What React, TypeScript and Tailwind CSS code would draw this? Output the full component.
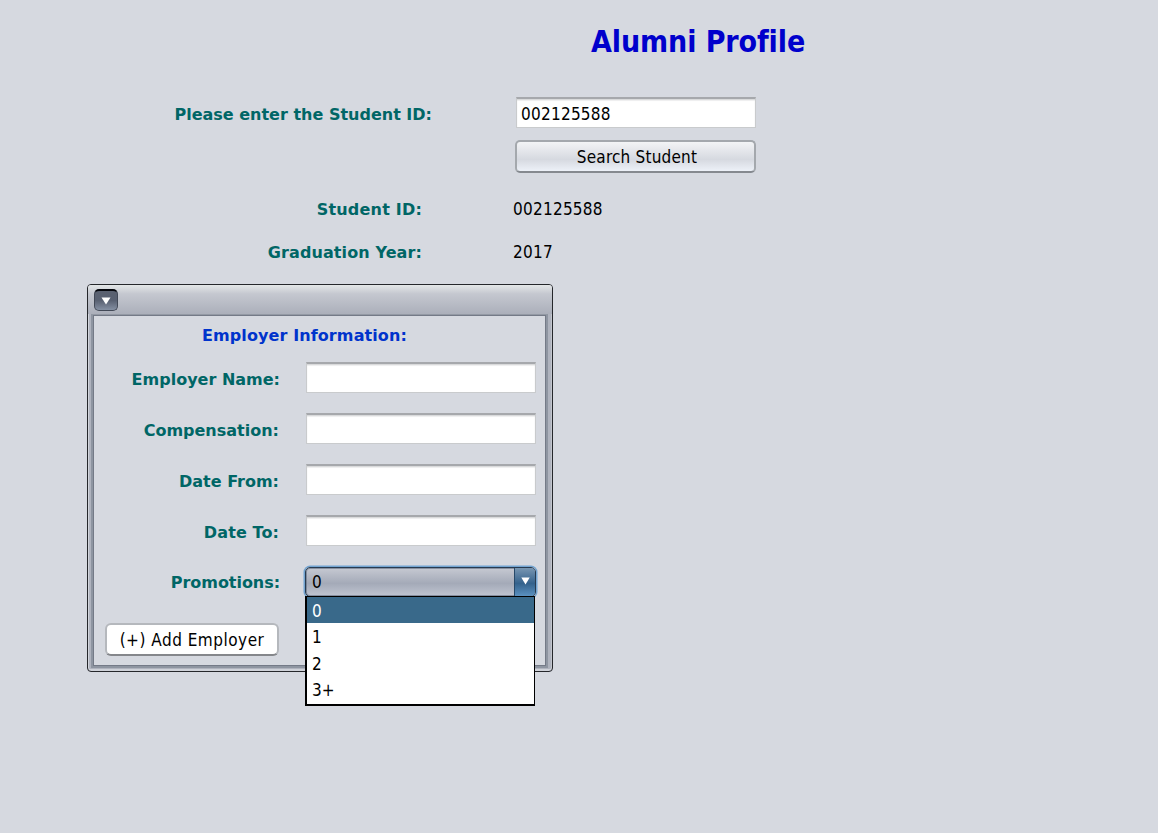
import React from "react";

const labelClass = "font-['DejaVu_Sans',sans-serif] text-[16px] font-bold leading-[20px] whitespace-nowrap text-[#006666] [font-stretch:normal]";
const valueClass = "text-[17px] leading-[20px] whitespace-nowrap text-black";
const fieldClass =
  "border border-t-2 border-[#c9cbcd] border-t-[#a6a8ac] bg-white shadow-[inset_0_1px_1px_#d6d7d9,inset_0_2px_1px_#f1f1f1] outline-none";

function EmployerRow({ label, tracking }: { label: string; tracking: string }) {
  return (
    <div className="flex h-[31px] items-center">
      <label className={`${labelClass} ${tracking} w-[186px] pt-[4px] text-right`}>{label}</label>
      <input className={`${fieldClass} ml-[26px] h-[31px] w-[230px]`} />
    </div>
  );
}

function Promotions() {
  const options = ["0", "1", "2", "3+"];
  return (
    <div className="relative ml-[25px] h-[30px] w-[231px]">
      <button className="flex h-[30px] w-[231px] overflow-hidden rounded-[5px] border border-[#273b51] bg-linear-to-b from-[#c6c9d2] via-[#a4aab8] via-55% to-[#c0c5d1] shadow-[0_0_0_1.5px_#73a4d1,inset_0_0_0_1px_#5f6b7f99]">
        <span className={`${valueClass} flex h-full flex-1 items-center pl-[6px] text-left`}>0</span>
        <span className="flex h-full w-[21px] items-center justify-center border-l border-[#27496a] bg-linear-to-b from-[#7896b2] via-[#34628c] via-55% to-[#5b91c0]">
          <svg width="9" height="8" viewBox="0 0 9 8" className="mb-[2px]">
            <path d="M0.3 0.5h8.4L4.5 7.6z" fill="#fff" />
          </svg>
        </span>
      </button>
      <ul className="absolute left-0 top-[29px] z-10 h-[110px] w-[230px] border-t border-r border-b-2 border-l-2 border-black bg-white">
        {options.map((o, i) => (
          <li
            key={o}
            className={`h-[26.4px] pl-[5px] pt-[4px] text-[17px] leading-[20px] ${i === 0 ? "bg-[#39698a] text-white" : "text-black"}`}
          >
            {o}
          </li>
        ))}
      </ul>
    </div>
  );
}

function EmployerFrame() {
  return (
    <section className="ml-[87px] mt-[17px] flex h-[388px] w-[466px] flex-col rounded-[4px] border border-[#25272b] bg-[#afb3be] shadow-[inset_1px_0_#d2d5dc,inset_0_-2px_#cfd2d9,inset_-1px_0_#c3c6ce]">
      <header className="flex h-[29px] shrink-0 items-start rounded-t-[3px] bg-linear-to-b from-[#e4e7e8] via-[#c5c8d0] via-30% to-[#abafba] pl-[6px] pt-[4px]">
        <button className="flex h-[22px] w-[24px] items-center justify-center rounded-[5px] border-[1px] border-t-2 border-[#424957] border-t-[#05070d] bg-linear-to-b from-[#5a6170] via-[#596172] to-[#8590a3]">
          <svg width="10" height="8" viewBox="0 0 10 8">
            <path d="M0.5 0.5h9L5 7.5z" fill="#fff" />
          </svg>
        </button>
      </header>
      <div className="mb-[3px] ml-[3px] mr-[4px] flex-1 border-[2px] border-t border-[#8e95a1] border-t-[#9399a4]">
        <div className="flex h-full flex-col border border-[#747a87] bg-[#d6d9e0]">
          <h2 className="ml-[108px] mt-[10px] h-[20px] font-['DejaVu_Sans',sans-serif] text-[16px] font-bold leading-[20px] tracking-[0.1px] whitespace-nowrap text-[#0033cc] [font-stretch:normal]">
            Employer Information:
          </h2>
          <div className="mt-[16px] flex flex-col gap-[20px]">
            <EmployerRow label="Employer Name:" tracking="" />
            <EmployerRow label="Compensation:" tracking="pr-px" />
            <EmployerRow label="Date From:" tracking="pr-px" />
            <EmployerRow label="Date To:" tracking="tracking-[0.1px] pr-px" />
          </div>
          <div className="mt-[21px] flex h-[30px] items-center">
            <label className={`${labelClass} w-[186px] pt-[2px] text-right tracking-[-0.05px]`}>Promotions:</label>
            <Promotions />
          </div>
          <button className={`${valueClass} ml-[11px] mt-[26px] h-[33px] w-[174px] rounded-[6px] border-2 border-[#b5b8bd] border-b-[#85878b] bg-white tracking-[0.5px]`}>
            (+) Add Employer
          </button>
        </div>
      </div>
    </section>
  );
}

export default function App() {
  return (
    <main className="h-[833px] w-[1158px] overflow-hidden bg-[#d6d9e0] font-['DejaVu_Sans_Condensed','DejaVu_Sans',sans-serif] [font-stretch:condensed] [font-variant-ligatures:none]">
      <h1 className="h-[97px] pl-[591px] pt-[22px] text-[30px] font-bold leading-[40px] tracking-[-0.1px] whitespace-nowrap text-[#0000cc]">Alumni Profile</h1>
      <div className="flex h-[31px] items-center">
        <label className={`${labelClass} w-[432px] pt-[5px] text-right`}>Please enter the Student ID:</label>
        <input defaultValue="002125588" className={`${fieldClass} ${valueClass} ml-[84px] h-[31px] w-[240px] px-[4px] pt-[1px] tracking-[0.25px]`} />
      </div>
      <button className={`${valueClass} ml-[515px] mt-[12px] block h-[33px] w-[241px] rounded-[5px] border-2 border-[#a4a8ad] border-b-[#85898f] bg-linear-to-b from-[#f3f4f6] via-[#d6d9e0] via-60% to-[#edf1f8] pl-[3px] pt-[1px] tracking-[0.2px]`}>
        Search Student
      </button>
      <div className="mt-[21px] flex h-[30px] items-center">
        <span className={`${labelClass} w-[422px] pt-[2px] text-right tracking-[0.2px]`}>Student ID:</span>
        <span className={`${valueClass} ml-[91px] tracking-[0.25px]`}>002125588</span>
      </div>
      <div className="mt-[13px] flex h-[30px] items-center">
        <span className={`${labelClass} w-[422px] pt-[2px] text-right tracking-[0.1px]`}>Graduation Year:</span>
        <span className={`${valueClass} ml-[91px] tracking-[0.25px]`}>2017</span>
      </div>
      <EmployerFrame />
    </main>
  );
}
